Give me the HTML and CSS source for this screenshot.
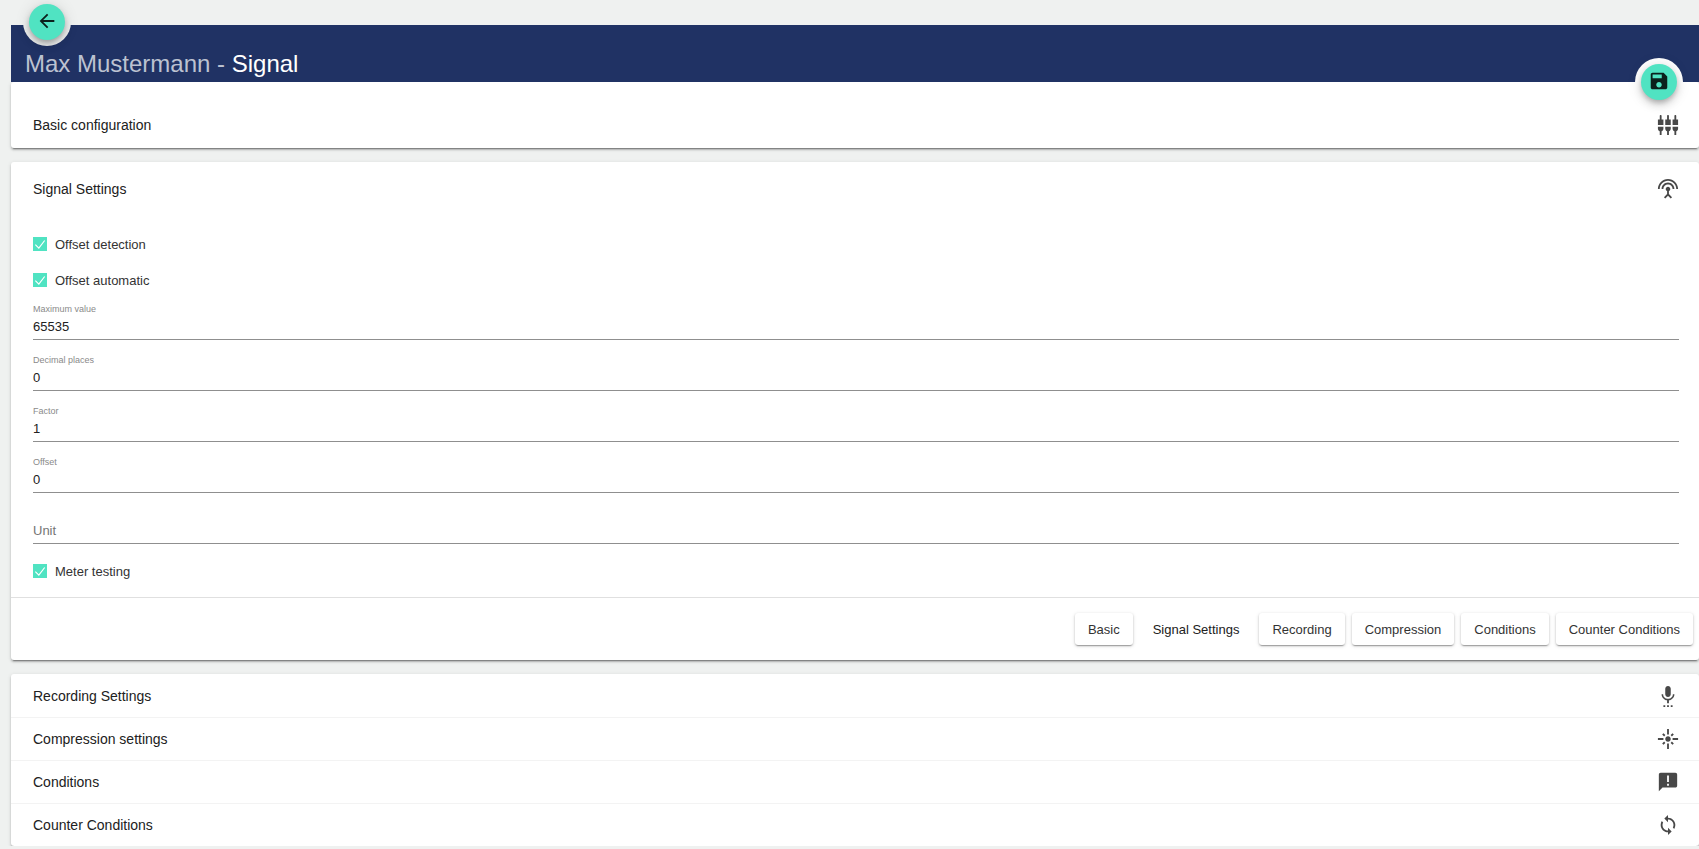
FILE: index.html
```
<!DOCTYPE html>
<html lang="en">
  <head>
    <meta charset="utf-8">
    <meta name="viewport" content="width=device-width, initial-scale=1">
    <title>Max Mustermann - Signal</title>
    <link rel="stylesheet" href="styles.css">
  </head>
  <body>
    <header class="toolbar">
      <span class="fab-ring fab-back">
        <button class="fab" type="button" aria-label="Back">
          <svg class="icon" viewBox="0 0 24 24"><path d="M20 11H7.83l5.59-5.59L12 4l-8 8 8 8 1.41-1.41L7.83 13H20v-2z"/></svg>
        </button>
      </span>
      <h1><a href="#">Max Mustermann -</a> Signal</h1>
      <span class="fab-ring fab-save">
        <button class="fab" type="submit" form="signal-form" aria-label="Save">
          <svg class="icon" viewBox="0 0 24 24"><path d="M17 3H5c-1.11 0-2 .9-2 2v14c0 1.1.89 2 2 2h14c1.1 0 2-.9 2-2V7l-4-4zm-5 16c-1.66 0-3-1.34-3-3s1.34-3 3-3 3 1.34 3 3-1.34 3-3 3zm3-10H5V5h10v4z"/></svg>
        </button>
      </span>
    </header>

    <main>
      <section class="panel panel-first">
        <button class="panel-header" type="button">
          Basic configuration
          <svg class="icon" viewBox="0 0 24 24"><path d="M5 2c0-.55-.45-1-1-1s-1 .45-1 1v4H1v6h6V6H5V2zm4 14c0 1.3.84 2.4 2 2.82V23h2v-4.18c1.16-.41 2-1.51 2-2.82v-2H9v2zm-8 0c0 1.3.84 2.4 2 2.82V23h2v-4.18C6.16 18.4 7 17.3 7 16v-2H1v2zM21 6V2c0-.55-.45-1-1-1s-1 .45-1 1v4h-2v6h6V6h-2zm-8-4c0-.55-.45-1-1-1s-1 .45-1 1v4H9v6h6V6h-2V2zm4 14c0 1.3.84 2.4 2 2.82V23h2v-4.18c1.16-.41 2-1.51 2-2.82v-2h-6v2z"/></svg>
        </button>
      </section>

      <section class="panel panel-open">
        <button class="panel-header" type="button" aria-expanded="true">
          Signal Settings
          <svg class="icon" viewBox="0 0 24 24"><path d="M12 5c-3.87 0-7 3.13-7 7h2c0-2.76 2.24-5 5-5s5 2.24 5 5h2c0-3.87-3.13-7-7-7zm1 9.29c.88-.39 1.5-1.26 1.5-2.29 0-1.38-1.12-2.5-2.5-2.5S9.5 10.62 9.5 12c0 1.02.62 1.9 1.5 2.29v3.3L7.59 21 9 22.41l3-3 3 3L16.41 21 13 17.59v-3.3zM12 1C5.93 1 1 5.93 1 12h2c0-4.97 4.03-9 9-9s9 4.03 9 9h2c0-6.07-4.93-11-11-11z"/></svg>
        </button>
        <form class="panel-body" id="signal-form">
          <label class="check">
            <span class="box"><input type="checkbox" checked><svg viewBox="0 0 24 24"><path d="M4 13l6 6L20 6"/></svg></span>
            Offset detection
          </label>
          <label class="check">
            <span class="box"><input type="checkbox" checked><svg viewBox="0 0 24 24"><path d="M4 13l6 6L20 6"/></svg></span>
            Offset automatic
          </label>
          <div class="field">
            <label for="maximum">Maximum value</label>
            <input id="maximum" type="text" value="65535">
          </div>
          <div class="field">
            <label for="decimals">Decimal places</label>
            <input id="decimals" type="text" value="0">
          </div>
          <div class="field">
            <label for="factor">Factor</label>
            <input id="factor" type="text" value="1">
          </div>
          <div class="field">
            <label for="offset">Offset</label>
            <input id="offset" type="text" value="0">
          </div>
          <div class="field">
            <input type="text" placeholder="Unit" aria-label="Unit">
          </div>
          <label class="check">
            <span class="box"><input type="checkbox" checked><svg viewBox="0 0 24 24"><path d="M4 13l6 6L20 6"/></svg></span>
            Meter testing
          </label>
        </form>
        <nav class="actions">
          <button type="button">Basic</button>
          <button type="button" class="current">Signal Settings</button>
          <button type="button">Recording</button>
          <button type="button">Compression</button>
          <button type="button">Conditions</button>
          <button type="button">Counter Conditions</button>
        </nav>
      </section>

      <section class="panel">
        <button class="panel-header" type="button">
          Recording Settings
          <svg class="icon" viewBox="0 0 24 24"><path d="M7 24h2v-2H7v2zm5-11c1.66 0 2.99-1.34 2.99-3L15 4c0-1.66-1.34-3-3-3S9 2.34 9 4v6c0 1.66 1.34 3 3 3zm-1 11h2v-2h-2v2zm4 0h2v-2h-2v2zm4-14h-1.7c0 3-2.54 5.1-5.3 5.1S6.7 13 6.7 10H5c0 3.41 2.72 6.23 6 6.72V20h2v-3.28c3.28-.49 6-3.31 6-6.72z"/></svg>
        </button>
        <button class="panel-header" type="button">
          Compression settings
          <svg class="icon" viewBox="0 0 24 24"><path d="M7 11H1v2h6v-2zm2.17-3.24L7.05 5.64 5.64 7.05l2.12 2.12 1.41-1.41zM13 1h-2v6h2V1zm5.36 6.05l-1.41-1.41-2.12 2.12 1.41 1.41 2.12-2.12zM17 11v2h6v-2h-6zm-5-2c-1.66 0-3 1.34-3 3s1.34 3 3 3 3-1.34 3-3-1.34-3-3-3zm2.83 7.24l2.12 2.12 1.41-1.41-2.12-2.12-1.41 1.41zm-9.19.71l1.41 1.41 2.12-2.12-1.41-1.41-2.12 2.12zM11 23h2v-6h-2v6z"/></svg>
        </button>
        <button class="panel-header" type="button">
          Conditions
          <svg class="icon" viewBox="0 0 24 24"><path d="M20 2H4c-1.1 0-1.99.9-1.99 2L2 22l4-4h14c1.1 0 2-.9 2-2V4c0-1.1-.9-2-2-2zm-7 14h-2v-2h2v2zm0-4h-2V5h2v7z"/></svg>
        </button>
        <button class="panel-header" type="button">
          Counter Conditions
          <svg class="icon" viewBox="0 0 24 24"><path d="M12 4V1L8 5l4 4V6c3.31 0 6 2.69 6 6 0 1.01-.25 1.97-.7 2.8l1.46 1.46C19.54 15.03 20 13.57 20 12c0-4.42-3.58-8-8-8zm0 14c-3.31 0-6-2.69-6-6 0-1.01.25-1.97.7-2.8L5.24 7.74C4.46 8.97 4 10.43 4 12c0 4.42 3.58 8 8 8v3l4-4-4-4v3z"/></svg>
        </button>
      </section>
    </main>
  </body>
</html>
```
FILE: styles.css
```
* {
  box-sizing: border-box;
}

body {
  margin: 0;
  padding: 25px 0 0 11px;
  background: #eff1f0;
  color: #212121;
  font-family: "Liberation Sans", Arial, sans-serif;
  font-size: 13px;
}

button,
input {
  font-family: inherit;
  font-size: 100%;
  color: inherit;
}

button {
  border: 0;
  cursor: pointer;
}

.icon {
  width: 22px;
  height: 22px;
  fill: #484848;
}

/* toolbar */
.toolbar {
  position: relative;
  height: 57px;
  padding: 24px 14px 0;
  background: #203264;
}

.toolbar h1 {
  margin: 0;
  font-size: 24px;
  line-height: 30px;
  font-weight: normal;
  color: #fff;
}

.toolbar a {
  color: #bcc2d1;
  text-decoration: none;
}

.fab-ring {
  position: absolute;
  z-index: 1;
  padding: 6px;
  border-radius: 50%;
}

.fab-back {
  top: -27px;
  left: 12px;
  background: #eff1f0;
}

.fab-save {
  right: 16px;
  bottom: -24px;
  background: #fff;
}

.fab {
  display: flex;
  align-items: center;
  justify-content: center;
  width: 36px;
  height: 36px;
  padding: 0 0 2px;
  border-radius: 50%;
  background: #50e3c2;
  box-shadow: 0 3px 5px -1px rgba(0, 0, 0, .2), 0 5px 9px rgba(0, 0, 0, .14), 0 1px 16px rgba(0, 0, 0, .12);
}

.fab .icon {
  fill: #0b211c;
}

/* panels */
.panel {
  margin-bottom: 14px;
  border-radius: 3px;
  background: #fff;
  box-shadow: 0 3px 1px -2px rgba(0, 0, 0, .3), 0 2px 2px rgba(0, 0, 0, .2), 0 1px 4px rgba(0, 0, 0, .12);
}

.panel:last-child {
  margin-bottom: 0;
}

.panel-first {
  padding: 21px 0 2px;
}

.panel-header {
  display: flex;
  align-items: center;
  justify-content: space-between;
  width: 100%;
  height: 43px;
  padding: 0 20px 0 22px;
  background: none;
  font-size: 14px;
  text-align: left;
}

.panel-header + .panel-header {
  border-top: 1px solid #f3f3f3;
}

.panel-open .panel-header {
  height: 54px;
}

.panel-body {
  padding: 10px 20px 8px 22px;
}

.check {
  display: flex;
  align-items: center;
  gap: 8px;
  height: 36px;
  color: #333;
}

.field + .check {
  margin-top: 9px;
}

.box {
  display: grid;
  width: 14px;
  height: 14px;
}

.box input {
  grid-area: 1 / 1;
  appearance: none;
  width: 14px;
  height: 14px;
  margin: 0;
}

.box input:checked {
  background: #50e3c2;
}

.box svg {
  grid-area: 1 / 1;
  width: 14px;
  height: 14px;
  fill: none;
  stroke: #fff;
  stroke-width: 2;
  pointer-events: none;
}

.field {
  display: flex;
  flex-direction: column;
  justify-content: flex-end;
  height: 51px;
}

.check + .field {
  height: 42px;
}

.field label {
  font-size: 9px;
  line-height: 10px;
  color: #8a8a8a;
}

.field input {
  width: 100%;
  height: 26px;
  padding: 0;
  border: 0;
  border-bottom: 1px solid #8f8f8f;
  background: none;
  outline: 0;
}

.field input::placeholder {
  color: #757575;
}

.actions {
  display: flex;
  justify-content: flex-end;
  gap: 7px;
  padding: 15px 6px;
  border-top: 1px solid #e0e0e0;
}

.actions button {
  height: 32px;
  padding: 0 13px;
  border-radius: 3px;
  background: #fff;
  color: #333;
  box-shadow: 0 2px 1px -1px rgba(0, 0, 0, .2), 0 1px 2px rgba(0, 0, 0, .2), 0 1px 4px rgba(0, 0, 0, .12);
}

.actions .current {
  background: none;
  color: #212121;
  box-shadow: none;
}
```
